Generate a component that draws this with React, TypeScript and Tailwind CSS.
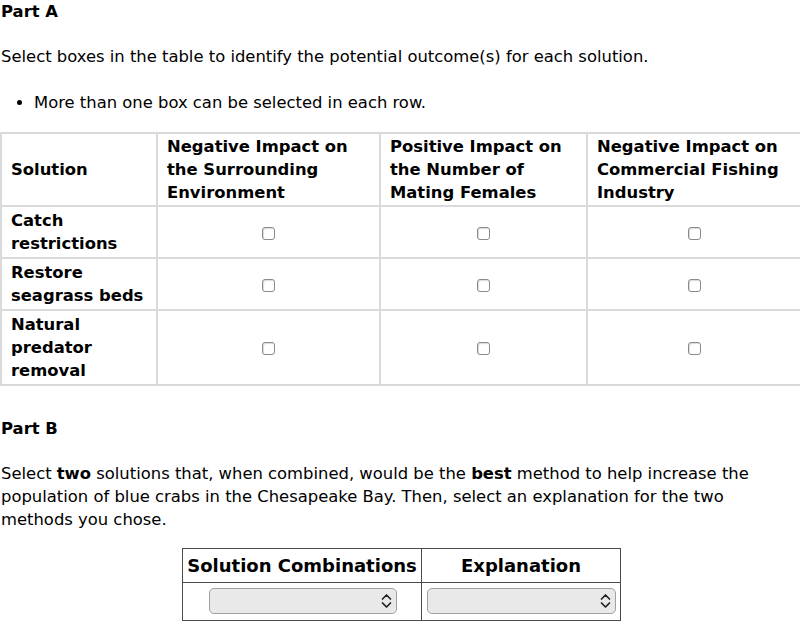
const columns = [
  { title: "Solution", width: "w-[156px]" },
  { title: "Negative Impact on the Surrounding Environment", width: "w-[223px]" },
  { title: "Positive Impact on the Number of Mating Females", width: "w-[207px]" },
  { title: "Negative Impact on Commercial Fishing Industry", width: "w-[214px]" },
];

const solutions = ["Catch restrictions", "Restore seagrass beds", "Natural predator removal"];

function Box() {
  return (
    <span className="inline-block h-[13px] w-[13px] rounded-[3px] border border-[#8a8a8a] bg-white shadow-[inset_1px_1px_1px_rgba(0,0,0,0.15)] align-middle" />
  );
}

// native-looking select with the up/down arrows on the right
function Dropdown({ width }: { width: string }) {
  return (
    <div
      className={`${width} flex h-[26px] items-center justify-end rounded-[5px] border border-[#a0a0a0] bg-[#e9e9e9] pr-[4px]`}
    >
      <svg width="11" height="18" viewBox="0 0 11 18" fill="none" stroke="#222" strokeWidth="1.7" strokeLinecap="round" strokeLinejoin="round">
        <path d="M1.5 7 L5.5 3 L9.5 7" />
        <path d="M1.5 11 L5.5 15 L9.5 11" />
      </svg>
    </div>
  );
}

export default function App() {
  return (
    <div className="w-[800px] h-[625px] overflow-hidden bg-white text-black text-[16.4px] leading-[23px] font-['DejaVu_Sans',Verdana,sans-serif]">
      <p className="font-bold pl-[1px]">Part A</p>

      <p className="mt-[22px] pl-[1px]">
        Select boxes in the table to identify the potential outcome(s) for each solution.
      </p>

      <ul className="mt-[23px] list-disc pl-[34px]">
        <li>More than one box can be selected in each row.</li>
      </ul>

      <table className="mt-[18px] table-fixed border-collapse border-2 border-[#dadada] w-[802px]">
        <thead>
          <tr>
            {columns.map((c) => (
              <th
                key={c.title}
                className={`${c.width} border-2 border-[#dadada] px-[9px] py-[1px] text-left align-middle font-bold`}
              >
                {c.title}
              </th>
            ))}
          </tr>
        </thead>
        <tbody>
          {solutions.map((s) => (
            <tr key={s}>
              <td className="border-2 border-[#dadada] px-[9px] pt-[2px] pb-[2px] font-bold">{s}</td>
              {[0, 1, 2].map((i) => (
                <td key={i} className="border-2 border-[#dadada] text-center align-middle">
                  <Box />
                </td>
              ))}
            </tr>
          ))}
        </tbody>
      </table>

      <p className="mt-[31px] font-bold pl-[1px]">Part B</p>

      <p className="mt-[22px] pl-[1px] pr-[30px]">
        Select <b>two</b> solutions that, when combined, would be the <b>best</b> method to help
        increase the population of blue crabs in the Chesapeake Bay. Then, select an explanation
        for the two methods you chose.
      </p>

      <table className="mt-[17px] ml-[182px] border-collapse border border-[#4a4a4a]">
        <thead>
          <tr>
            <th className="w-[239px] border border-[#4a4a4a] px-[4px] py-[5px] text-[18px] leading-[23px] font-bold text-center">
              Solution Combinations
            </th>
            <th className="w-[199px] border border-[#4a4a4a] px-[4px] py-[5px] text-[18px] leading-[23px] font-bold text-center">
              Explanation
            </th>
          </tr>
        </thead>
        <tbody>
          <tr>
            <td className="border border-[#4a4a4a] pt-[5px] pb-[6px] pl-[26px]">
              <Dropdown width="w-[188px]" />
            </td>
            <td className="border border-[#4a4a4a] pt-[5px] pb-[6px] pl-[5px]">
              <Dropdown width="w-[189px]" />
            </td>
          </tr>
        </tbody>
      </table>
    </div>
  );
}
